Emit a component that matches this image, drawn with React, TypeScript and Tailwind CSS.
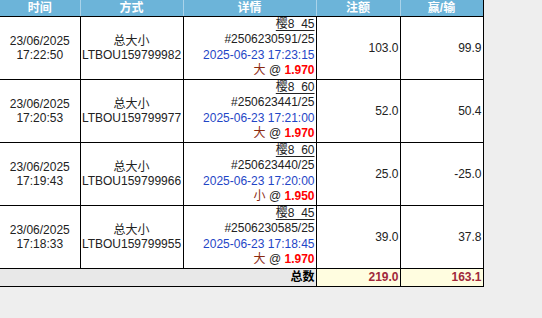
import React from "react";

type Bet = {
  date: string;
  time: string;
  code: string;
  league: string;
  ticket: string;
  placed: string;
  pick: string;
  odds: string;
  stake: string;
  result: string;
};

const bets: Bet[] = [
  { date: "23/06/2025", time: "17:22:50", code: "LTBOU159799982", league: "樱8_45", ticket: "#2506230591/25", placed: "2025-06-23 17:23:15", pick: "大", odds: "1.970", stake: "103.0", result: "99.9" },
  { date: "23/06/2025", time: "17:20:53", code: "LTBOU159799977", league: "樱8_60", ticket: "#250623441/25", placed: "2025-06-23 17:21:00", pick: "大", odds: "1.970", stake: "52.0", result: "50.4" },
  { date: "23/06/2025", time: "17:19:43", code: "LTBOU159799966", league: "樱8_60", ticket: "#250623440/25", placed: "2025-06-23 17:20:00", pick: "小", odds: "1.950", stake: "25.0", result: "-25.0" },
  { date: "23/06/2025", time: "17:18:33", code: "LTBOU159799955", league: "樱8_45", ticket: "#2506230585/25", placed: "2025-06-23 17:18:45", pick: "大", odds: "1.970", stake: "39.0", result: "37.8" },
];

const font = { fontFamily: '"Liberation Sans", Arial, "Noto Sans CJK SC", sans-serif' };

export default function App() {
  return (
    <div className="min-h-screen w-[542px] h-[318px] bg-[#eeeeee]" style={font}>
      <table className="w-[483px] table-fixed border-collapse text-[12px] text-[#222]">
        <colgroup>
          <col className="w-[80px]" />
          <col className="w-[103px]" />
          <col className="w-[133px]" />
          <col className="w-[84px]" />
          <col className="w-[83px]" />
        </colgroup>
        <thead>
          <tr className="h-[16px] bg-[#6cb4d9] text-white font-bold leading-[14px]">
            {["时间", "方式", "详情", "注额", "赢/输"].map((h, i) => (
              <th
                key={h}
                className={`border-b border-b-black p-0 text-center ${i < 4 ? "border-r border-r-[#a9d3ea]" : "border-r border-r-black"}`}
              >
                {h}
              </th>
            ))}
          </tr>
        </thead>
        <tbody>
          {bets.map((b) => (
            <tr key={b.code} className="h-[63px] bg-white">
              {/* time */}
              <td className="border-b border-r border-black p-0 text-center align-middle leading-[14px]">
                <div>{b.date}</div>
                <div>{b.time}</div>
              </td>
              {/* type */}
              <td className="border-b border-r border-black p-0 text-center align-middle leading-[14px]">
                <div>总大小</div>
                <div>{b.code}</div>
              </td>
              {/* detail */}
              <td className="border-b border-r border-black p-0 pr-[1px] text-right align-middle leading-[15.5px] whitespace-nowrap">
                <div>
                  <span className="underline decoration-1 underline-offset-[2px] decoration-[#222]">{b.league}</span>
                </div>
                <div>{b.ticket}</div>
                <div className="text-[#1f46c6]">{b.placed}</div>
                <div>
                  <span className="text-[#8b2a10]">{b.pick}</span> @{" "}
                  <span className="font-bold text-[#ff0000]">{b.odds}</span>
                </div>
              </td>
              <td className="border-b border-r border-black p-0 pr-[1px] text-right align-middle">{b.stake}</td>
              <td className="border-b border-r border-black p-0 pr-[1px] text-right align-middle">{b.result}</td>
            </tr>
          ))}
          <tr className="h-[18px] font-bold leading-[16px]">
            <td colSpan={3} className="border-b border-r border-black bg-[#e8e8e8] p-0 pr-[1px] text-right text-black">
              总数
            </td>
            <td className="border-b border-r border-black bg-[#fffde0] p-0 pr-[1px] text-right text-[#a0283a]">219.0</td>
            <td className="border-b border-r border-black bg-[#fffde0] p-0 pr-[1px] text-right text-[#a0283a]">163.1</td>
          </tr>
        </tbody>
      </table>
    </div>
  );
}
